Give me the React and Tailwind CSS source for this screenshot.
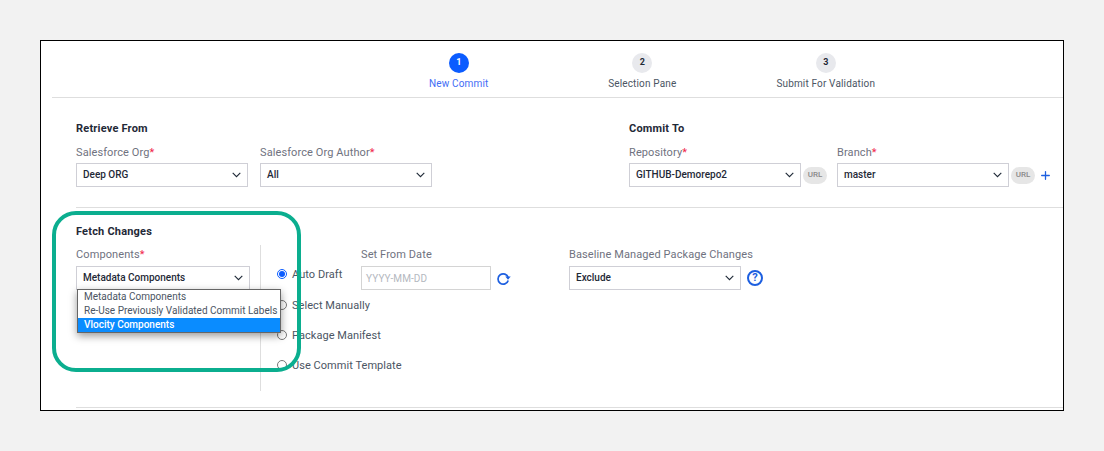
import { Plus } from "lucide-react";

const font = { fontFamily: "Roboto, sans-serif" };

const Chevron = () => (
    <svg width="9" height="6" viewBox="0 0 9 6" fill="none" className="shrink-0">
        <path d="M0.7 0.8l3.8 3.8 3.8-3.8" stroke="#1f2937" strokeWidth="1.1" />
    </svg>
);

const Label = ({ text, required }) => (
    <div className="text-[11px] leading-[14px] tracking-[0.1px] text-[#6f7280]">
        {text}
        {required && <span className="text-[#f0264b]">*</span>}
    </div>
);

const Select = ({ value, width }) => (
    <div className={`${width} h-[24px] border border-[#cfcfd6] bg-white flex items-center justify-between pl-[6px] pr-[6px] text-[10px] font-medium text-[#1f2937]`}>
        <span className="mb-[2px]">{value}</span>
        <Chevron />
    </div>
);

const UrlPill = () => (
    <div className="w-[24px] h-[17px] rounded-full bg-[#e6e6e6] flex items-center justify-center text-[8px] font-medium text-[#8a8a8a]">
        URL
    </div>
);

const Step = ({ n, label, active }) => (
    <div className="w-[183.5px] flex flex-col items-center">
        <div className={`w-[20px] h-[20px] rounded-full flex items-center justify-center text-[9px] font-bold ${active ? "bg-[#0b5cff] text-white" : "bg-[#e8e9ed] text-[#1f2937]"}`}>
            {n}
        </div>
        <div className={`mt-[4px] text-[10px] leading-[14px] tracking-[0.15px] ${active ? "text-[#3f6df5]" : "text-[#4b5563]"}`}>
            {label}
        </div>
    </div>
);

const Radio = ({ label, checked, className }) => (
    <div className={`h-[14px] flex items-center whitespace-nowrap ${className || ""}`}>
        <span className={`w-[10px] h-[10px] shrink-0 rounded-full border bg-white flex items-center justify-center ${checked ? "border-[#0b5cff]" : "border-[#777777]"}`}>
            {checked && <span className="w-[6px] h-[6px] rounded-full bg-[#0b5cff]" />}
        </span>
        <span className="ml-[5px] mt-[2px] text-[11px] tracking-[0.05px] text-[#4b5563]">{label}</span>
    </div>
);

const Refresh = () => (
    <svg width="15" height="15" viewBox="0 0 15 15" fill="none" className="ml-[5px]">
        <path d="M12.2 6.5A5.2 5.2 0 1 0 12.2 9.5" stroke="#1d5fe0" strokeWidth="1.7" />
        <path d="M9.3 5.6h5.4L12 8.7z" fill="#1d5fe0" />
    </svg>
);

const Title = ({ children }) => (
    <div className="text-[11px] leading-[14px] font-bold tracking-[0.2px] text-[#1f2937]">{children}</div>
);

export default function App() {
    return (
        <div style={font} className="w-[1104px] h-[451px] bg-[#f2f2f2] pt-[40px] pl-[40px] overflow-hidden">
            <div className="relative w-[1024px] h-[371px] border border-black bg-white">
                {/* stepper */}
                <div className="ml-[11px] h-[57px] border-b border-[#dedede] pt-[12px] pl-[315px] flex">
                    <Step n="1" label="New Commit" active />
                    <Step n="2" label="Selection Pane" />
                    <Step n="3" label="Submit For Validation" />
                </div>

                {/* retrieve / commit */}
                <div className="ml-[35px] h-[110px] border-b border-[#dedede] pt-[24px] flex">
                    <div className="w-[553px]">
                        <Title>Retrieve From</Title>
                        <div className="mt-[10px] flex gap-[12px]">
                            <div>
                                <Label text="Salesforce Org" required />
                                <div className="mt-[3px]"><Select value="Deep ORG" width="w-[172px]" /></div>
                            </div>
                            <div>
                                <Label text="Salesforce Org Author" required />
                                <div className="mt-[3px]"><Select value="All" width="w-[172px]" /></div>
                            </div>
                        </div>
                    </div>
                    <div>
                        <Title>Commit To</Title>
                        <div className="mt-[10px] flex">
                            <div>
                                <Label text="Repository" required />
                                <div className="mt-[3px] flex items-center gap-[2px]">
                                    <Select value="GITHUB-Demorepo2" width="w-[172px]" />
                                    <UrlPill />
                                </div>
                            </div>
                            <div className="ml-[10px]">
                                <Label text="Branch" required />
                                <div className="mt-[3px] flex items-center gap-[2px]">
                                    <Select value="master" width="w-[172px]" />
                                    <UrlPill />
                                    <Plus size={13} strokeWidth={2.4} color="#1d5fe0" className="ml-[2px]" />
                                </div>
                            </div>
                        </div>
                    </div>
                </div>

                {/* fetch changes */}
                <div className="ml-[35px] h-[200px] border-b border-[#dedede] pt-[17px]">
                    <Title>Fetch Changes</Title>
                    <div className="flex">
                        <div className="w-[184px] pt-[9px]">
                            <Label text="Components" required />
                            <div className="mt-[4px]"><Select value="Metadata Components" width="w-[174px]" /></div>
                        </div>
                        <div className="w-[1px] h-[146px] mt-[6px] bg-[#dedede]" />
                        <div className="pl-[16px] pt-[28px] w-[100px] flex flex-col gap-[16px]">
                            <Radio label="Auto Draft" checked className="mb-[1px]" />
                            <Radio label="Select Manually" />
                            <Radio label="Package Manifest" />
                            <Radio label="Use Commit Template" />
                        </div>
                        <div className="pt-[9px] w-[208px]">
                            <Label text="Set From Date" />
                            <div className="mt-[4px] flex items-center">
                                <div className="w-[130px] h-[24px] border border-[#d4d4d4] pl-[4px] flex items-center text-[10px] tracking-[0.1px] text-[#b4b8c0]">YYYY-MM-DD</div>
                                <Refresh />
                            </div>
                        </div>
                        <div className="pt-[9px]">
                            <Label text="Baseline Managed Package Changes" />
                            <div className="mt-[4px] flex items-center">
                                <Select value="Exclude" width="w-[172px]" />
                                <div className="ml-[6px] w-[16px] h-[16px] rounded-full border-2 border-[#1d5fe0] flex items-center justify-center text-[11px] font-bold text-[#1d5fe0]">?</div>
                            </div>
                        </div>
                    </div>
                </div>

                {/* open menu */}
                <div className="absolute left-[36px] top-[248px] w-[204px] border border-[#666666] bg-white shadow-[0_3px_8px_rgba(0,0,0,0.4)] text-[10px] leading-[14px] text-[#4b5563]">
                    <div className="pl-[6px]">Metadata Components</div>
                    <div className="pl-[6px] whitespace-nowrap">Re-Use Previously Validated Commit Labels</div>
                    <div className="pl-[6px] bg-[#0a8cff] text-white font-medium">Vlocity Components</div>
                </div>

                {/* highlight */}
                <div className="absolute left-[11px] top-[170px] w-[249px] h-[161px] border-[4px] border-[#0bae8f] rounded-[24px] pointer-events-none" />
            </div>
        </div>
    );
}
